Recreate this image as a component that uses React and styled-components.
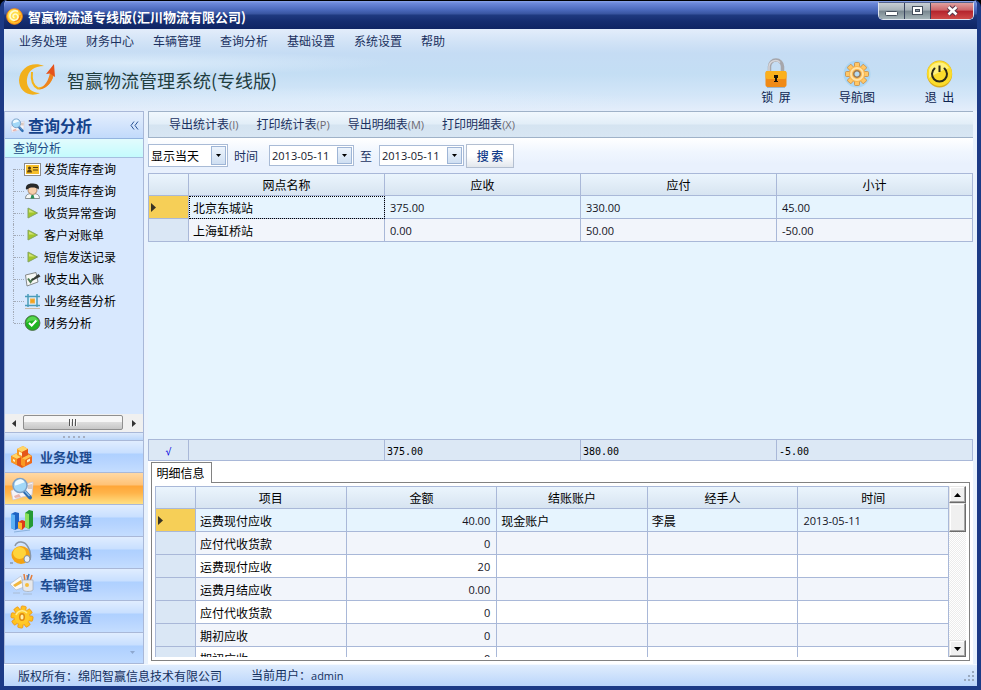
import React from "react";
import styled, { createGlobalStyle, css } from "styled-components";

const line = "#a9b8d8";
const cjk = '"Noto Sans CJK SC", sans-serif';
const latin = '"Open Sans", "Noto Sans CJK SC", sans-serif';

const GlobalStyle = createGlobalStyle`
  *, *::before, *::after { box-sizing: border-box; }
  html, body, #root { height: 100%; margin: 0; }
  body { background: #000; font: 12px/16px ${cjk}; color: #000; overflow: hidden; }
  button, input, select { font: inherit; color: inherit; margin: 0; padding: 0; border: 0; background: none; border-radius: 0; }
  button { white-space: pre; }
  svg { display: block; flex: none; }
`;

const Window = styled.div`
  height: 100vh;
  display: flex;
  flex-direction: column;
  border: solid #1c3a86;
  border-width: 0 4px 4px;
  border-radius: 7px 7px 0 0;
  background: #e9f2fd;
  overflow: hidden;
`;

const TitleBar = styled.header`
  flex: none;
  display: flex;
  align-items: flex-start;
  height: 29px;
  margin: 0 -4px;
  border-top: 1px solid #000;
  background: linear-gradient(#8ba5ea 0, #6d89da 2px, #4a68bb 9px, #38549f 13px, #1f3a80 14px, #152d70 20px, #0f2564 28px);
`;

const TitleText = styled.h1`
  flex: 1;
  margin: 7px 0 0 5px;
  font-size: 13px;
  line-height: 18px;
  font-weight: 700;
  color: #fff;
`;

const TitleIcon = styled.div`
  margin: 7px 0 0 6px;
`;

const Controls = styled.div`
  display: flex;
  margin: 1px 7px 0 0;
  height: 18px;
  border: 1px solid #dfe5ef;
  border-top-color: #56648c;
  border-radius: 0 0 5px 5px;
  overflow: hidden;
`;

const ControlButton = styled.button`
  display: flex;
  align-items: center;
  justify-content: center;
  width: ${(p) => (p.$close ? 42 : 26)}px;
  border-right: ${(p) => (p.$close ? 0 : 1)}px solid #39435f;
  background: ${(p) =>
    p.$close
      ? "linear-gradient(#e0a1a0, #cd6468 45%, #b4232c 50%, #cf4a48)"
      : "linear-gradient(#c8ced4, #a6b0b8 45%, #78868f 50%, #a5b4b8)"};
`;

const Banner = styled.div`
  flex: none;
  display: grid;
  grid-template-columns: 1fr auto;
  grid-template-rows: 24px 58px;
  background:
    radial-gradient(ellipse 260px 12px at 130px 34px, rgba(226, 240, 252, 0.7), transparent),
    radial-gradient(ellipse 300px 14px at 340px 72px, rgba(226, 240, 252, 0.5), transparent),
    linear-gradient(#e3edfb 0, #d0e2f6 14px, #c5dcf4 24px, #c4def4 45px, #d3e6f8 66px, #e4eefb 82px);
`;

const MenuBar = styled.nav`
  grid-column: 1 / -1;
  display: flex;
  gap: 19px;
  padding-left: 15px;
  color: #1b3160;
`;

const MenuButton = styled.button`
  height: 24px;
`;

const Brand = styled.div`
  display: flex;
  align-items: center;
  gap: 10px;
  padding: 0 0 5px 15px;
  font-size: 18px;
  line-height: 26px;
  color: #1f3d3f;
`;

const Actions = styled.div`
  display: flex;
  padding-right: 4px;
`;

const ActionButton = styled.button`
  position: relative;
  display: flex;
  flex-direction: column;
  align-items: center;
  width: ${(p) => p.$width}px;
  height: 52px;
  padding-top: 5px;
  line-height: 14px;
  color: #0d2550;

  & + &::before {
    content: "";
    position: absolute;
    left: 0;
    top: 14px;
    width: 1px;
    height: 26px;
    background: #aecbe9;
  }
`;

const Body = styled.div`
  flex: 1;
  min-height: 0;
  display: grid;
  grid-template-columns: 140px minmax(0, 1fr);
  column-gap: 4px;
  padding-right: 4px;
`;

const Sidebar = styled.aside`
  display: flex;
  flex-direction: column;
  min-height: 0;
  border: 1px solid ${line};
  background: #d8e8fe;
`;

const SideTitle = styled.h2`
  flex: none;
  display: flex;
  align-items: center;
  gap: 3px;
  height: 27px;
  margin: 0;
  padding: 0 4px 0 5px;
  border-bottom: 1px solid #93b4e0;
  background: linear-gradient(#e5effd, #c2dafb);
  font-size: 16px;
  line-height: 22px;
  color: #15428b;
`;

const CollapseButton = styled.button`
  margin-left: auto;
`;

const SideGroup = styled.h3`
  flex: none;
  height: 19px;
  margin: 0;
  padding-left: 8px;
  border-bottom: 1px solid #a5bfdf;
  background: linear-gradient(#e2fbfd, #c4fbfd);
  font-size: 12px;
  line-height: 18px;
  font-weight: 400;
  color: #1b4a86;
`;

const Tree = styled.ul`
  flex: 1;
  min-height: 0;
  margin: 0;
  padding: 0 0 0 8px;
  list-style: none;
`;

const TreeItem = styled.li`
  position: relative;
  height: 22px;
  padding-left: 11px;

  &::before {
    content: "";
    position: absolute;
    left: 0;
    top: ${(p) => (p.$first ? 11 : 0)}px;
    height: ${(p) => (p.$first || p.$last ? 11 : 22)}px;
    border-left: 1px dotted #a3abb8;
  }
  &::after {
    content: "";
    position: absolute;
    left: 1px;
    top: 11px;
    width: 10px;
    border-top: 1px dotted #a3abb8;
  }
`;

const TreeLink = styled.a`
  display: flex;
  align-items: center;
  gap: 3px;
  height: 22px;
  color: #000;
  text-decoration: none;
`;

const HScroll = styled.div`
  flex: none;
  display: flex;
  height: 18px;
  background: #f0f0f0;
`;

const HArrow = styled.button`
  display: flex;
  align-items: center;
  justify-content: center;
  width: 18px;
`;

const HThumb = styled.div`
  flex: 1;
  display: flex;
  align-items: center;
  justify-content: center;
  gap: 1px;
  margin: 1px 2px 2px 0;
  border: 1px solid #8f8f8f;
  border-radius: 2px;
  background: linear-gradient(#f6f6f6 0 45%, #dcdcdc 50%, #c6c6c6);
`;

const Grip = styled.i`
  width: 2px;
  height: 7px;
  border-left: 1px solid #555;
  background: #f8f8f8;
`;

const Splitter = styled.div`
  flex: none;
  display: flex;
  align-items: center;
  justify-content: center;
  gap: 3px;
  height: 9px;
  border: solid ${line};
  border-width: 1px 0;
  background: linear-gradient(#dceafd, #bcd7fb);
`;

const Dot = styled.i`
  width: 2px;
  height: 2px;
  background: #a5afc2;
`;

const NavButton = styled.button`
  flex: none;
  display: flex;
  align-items: center;
  gap: 6px;
  height: 32px;
  padding-left: 5px;
  border-bottom: 1px solid ${line};
  font-size: 13px;
  font-weight: 700;
  color: ${(p) => (p.$active ? "#000" : "#1e4c8f")};
  background: ${(p) =>
    p.$active
      ? "linear-gradient(#ffd9a5 0, #ffc276 12px, #ffa638 13px, #ffb44a 20px, #ffe084 31px)"
      : "linear-gradient(#e0edff 0, #c8dfff 12px, #aed0ff 13px, #b6d4ff 20px, #c4ddff 31px)"};
`;

const NavFooter = styled.div`
  flex: none;
  display: flex;
  align-items: flex-end;
  justify-content: flex-end;
  height: 30px;
  padding: 0 8px 9px 0;
  background: linear-gradient(#e0edff 0, #c8dfff 12px, #aed0ff 13px, #bfdaff 30px);
`;

const Main = styled.main`
  display: flex;
  flex-direction: column;
  min-width: 0;
  min-height: 0;
`;

const Toolbar = styled.div`
  flex: none;
  display: flex;
  gap: 18px;
  height: 27px;
  padding-left: 20px;
  border: 1px solid #9fb2c8;
  border-right: 0;
  background: linear-gradient(#f1f8fe 0, #e2eef8 12px, #d5e4f1 13px, #d8e6f3 25px);
  color: #1b3160;
`;

const ToolButton = styled.button`
  height: 25px;
`;

const Key = styled.span`
  font-family: ${latin};
  font-size: 11px;
  color: #6d6a72;
`;

const FilterBar = styled.form`
  flex: none;
  display: flex;
  align-items: center;
  height: 35px;
  background: linear-gradient(#ffffff 0, #f0f6fe 14px, #e9f1fd 26px);
  color: #1b3160;
`;

const FieldLabel = styled.label`
  padding: 0 ${(p) => (p.$wide ? 11 : 7)}px 0 6px;
`;

const Combo = styled.div`
  position: relative;
  display: flex;
  width: ${(p) => p.$width}px;
  height: ${(p) => p.$height}px;
  padding: 1px;
  border: 1px solid #a9bbd6;
  background: #fff;
  color: #000;
`;

const comboField = css`
  flex: 1;
  min-width: 0;
  width: 0;
  outline: 0;
  appearance: none;
`;

const ComboSelect = styled.select`
  ${comboField}
  padding-left: 1px;
`;

const DateInput = styled.input`
  ${comboField}
  padding-left: 1px;
  font-family: ${latin};
  font-size: 11px;
  color: #14182c;
`;

const DropMark = styled.span`
  position: absolute;
  right: 1px;
  top: 1px;
  bottom: 1px;
  width: 15px;
  display: flex;
  align-items: center;
  justify-content: center;
  border: 1px solid #9eb5d6;
  background: linear-gradient(#edf4fc, #cfdff2);
  pointer-events: none;
`;

const SearchButton = styled.button`
  width: 48px;
  height: 24px;
  margin-left: 2px;
  border: 1px solid #b3bfd1;
  background: linear-gradient(#ffffff 0 50%, #e2e7ed);
  font-weight: 500;
  color: #153d8a;
`;

const GridArea = styled.section`
  flex: 1;
  min-height: 0;
  display: flex;
  flex-direction: column;
  justify-content: space-between;
  background: #e6f4fe;
`;

const Table = styled.table`
  width: 100%;
  table-layout: fixed;
  border-collapse: separate;
  border-spacing: 0;
  border: solid ${line};
  border-width: 1px 0 0 1px;
`;

const MarkCol = styled.col`
  width: 40px;
`;

const HeadCell = styled.th`
  height: 22px;
  padding: 0;
  border: solid ${line};
  border-width: 0 1px 1px 0;
  background: linear-gradient(#ebf5fd, #d7e4f1);
  font-weight: 400;
`;

const Row = styled.tr`
  background: ${(p) => (p.$selected ? "#e6f4fe" : p.$alt ? "#f2f5fb" : "#fff")};
`;

const Cell = styled.td`
  height: 23px;
  padding: 1px 6px 0 4px;
  border: solid ${line};
  border-width: 0 1px 1px 0;
  line-height: 16px;
  text-align: ${(p) => (p.$right ? "right" : "left")};
  ${(p) =>
    p.$number &&
    css`
      padding-left: 5px;
      font-family: ${latin};
      font-size: 11px;
      color: #14141f;
    `}
  ${(p) =>
    p.$focused &&
    css`
      outline: 1px dotted #000;
      outline-offset: -1px;
    `}
`;

const MarkCell = styled.td`
  padding: 0 0 0 2px;
  border: solid ${line};
  border-width: 0 1px 1px 0;
  background: ${(p) => (p.$selected ? "#f6cf57" : "#dae7f5")};
`;

const SumCell = styled.td`
  height: 21px;
  padding: 3px 2px 0;
  border: solid ${line};
  border-width: 0 1px 1px 0;
  background: #dce8f5;
  font: 10px/16px "DejaVu Sans Mono", monospace;
  text-align: ${(p) => (p.$check ? "center" : "left")};
  color: ${(p) => (p.$check ? "#0000e0" : "#000")};
`;

const Detail = styled.section`
  flex: none;
  display: flex;
  flex-direction: column;
  height: 203px;
  padding: 1px 3px 3px;
  background: #fff;
`;

const Tab = styled.button`
  position: relative;
  z-index: 1;
  align-self: flex-start;
  width: 61px;
  height: 21px;
  margin-bottom: -1px;
  padding-right: 2px;
  border: 1px solid #828282;
  border-bottom: 0;
  background: #fff;
  line-height: 18px;
`;

const TabPanel = styled.div`
  flex: 1;
  min-height: 0;
  display: flex;
  padding: 3px;
  border: 1px solid #828282;
`;

const DetailClip = styled.div`
  flex: 1;
  min-width: 0;
  overflow: hidden;
`;

const VScroll = styled.div`
  flex: none;
  display: flex;
  flex-direction: column;
  width: 17px;
  background: repeating-conic-gradient(#fff 0 25%, #ececec 0 50%) 0 0 / 2px 2px;
`;

const raised = css`
  border: 1px solid;
  border-color: #e6e6e6 #6c6c6c #6c6c6c #e6e6e6;
  box-shadow: inset -1px -1px #a5a5a5, inset 1px 1px #fff;
  background: #f0f0f0;
`;

const VArrow = styled.button`
  ${raised}
  display: flex;
  align-items: center;
  justify-content: center;
  height: 17px;
`;

const VThumb = styled.div`
  ${raised}
  height: 29px;
  margin-bottom: auto;
`;

const StatusBar = styled.footer`
  flex: none;
  display: flex;
  align-items: center;
  gap: 29px;
  height: 22px;
  padding: 0 2px 0 14px;
  border-top: 1px solid #f4f9ff;
  background: linear-gradient(#e0edfd, #bad5fb);
  color: #14305e;
`;

const StatusUser = styled.span`
  flex: 1;
`;

const UserName = styled.span`
  font-family: ${latin};
  font-size: 11px;
`;

const Arrow = ({ dir = "down", size = 7, color = "#000" }) => {
  const h = (size + 1) / 2;
  const side = dir === "left" || dir === "right";
  const d = {
    down: `M0 0H${size}L${size / 2} ${h}Z`,
    up: `M0 ${h}H${size}L${size / 2} 0Z`,
    right: `M0 0V${size}L${h} ${size / 2}Z`,
    left: `M${h} 0V${size}L0 ${size / 2}Z`,
  }[dir];
  return (
    <svg width={side ? h : size} height={side ? size : h} aria-hidden="true">
      <path d={d} fill={color} />
    </svg>
  );
};

const teeth = [0, 45, 90, 135, 180, 225, 270, 315];

const SwirlIcon = () => (
  <svg width="17" height="17" viewBox="0 0 17 17" aria-hidden="true">
    <circle cx="8.5" cy="8.5" r="7.8" fill="#ffc02a" stroke="#ff8a14" />
    <circle cx="7.7" cy="7.2" r="6" fill="#ffe04e" />
    <path d="M12 3.5C8 1.5 3.5 4.5 4 8.5C4.4 12 9 13.5 11.3 11C13.3 8.5 11 5.5 8.4 6.2C6.3 7 6.7 9.7 8.6 9.5" fill="none" stroke="#fffbd4" strokeWidth="1.5" />
    <path d="M14 7c.6 3.500-2 6.500-5.500 6.500" fill="none" stroke="#f57a12" strokeWidth="1.200" />
  </svg>
);

const LogoIcon = () => (
  <svg width="38" height="33" viewBox="0 0 38 33" aria-hidden="true">
    <path d="M25 3C14-2 1 4 0 17C0 28 10 35 21 30C12 30 7 24 8 16C9 8 15 3 25 3Z" fill="#f2b01c" />
    <path d="M13 9C12 17 14 23 19 25.500C27 25 33 18 33.500 11" fill="none" stroke="#f4b51c" strokeWidth="2" />
    <path d="M20 26.500C29 25 34 18 35 10L31 9C30 17 26 23 20 26.500Z" fill="#ee8420" />
    <path d="M35 1L27 11L31 10.500L36 14Z" fill="#e5531b" />
  </svg>
);

const LockIcon = () => (
  <svg width="26" height="32" viewBox="0 0 26 32" aria-hidden="true">
    <path d="M6.500 15V8.500a6.500 6.500 0 0 1 13 0V15" fill="none" stroke="#a6a6ab" strokeWidth="3.500" />
    <path d="M6 15V8.500a6.500 6.500 0 0 1 11-4" fill="none" stroke="#d6d6da" strokeWidth="1.500" />
    <rect x="2.500" y="13" width="21" height="16" rx="2" fill="#f08a16" />
    <rect x="2.500" y="13" width="21" height="8" rx="2" fill="#fbb01c" />
    <path d="M11 17h4v3h-1v3h1v1h-4v-1h1v-3h-1Z" fill="#1c1308" />
    <path d="M4 29.500h18" stroke="#9db6cc" />
  </svg>
);

const GearIcon = () => (
  <svg width="32" height="32" viewBox="-16 -16 32 32" aria-hidden="true">
    <circle r="13.500" fill="#8dcdf5" opacity=".5" />
    {teeth.map((a) => (
      <rect key={a} x="-2.500" y="-11.500" width="5" height="7" rx="1" transform={`rotate(${a})`} fill="#ffc766" stroke="#c58a45" strokeWidth=".8" />
    ))}
    <circle r="8" fill="#f9b64e" />
    <circle r="6" fill="none" stroke="#ffe2a6" strokeWidth="2" />
    <circle r="3.200" fill="#b5dbf3" stroke="#9a7954" strokeWidth="1.500" />
  </svg>
);

const PowerIcon = () => (
  <svg width="32" height="32" viewBox="0 0 32 32" aria-hidden="true">
    <ellipse cx="15.500" cy="16" rx="12.700" ry="13.500" fill="#d8ac20" />
    <circle cx="15.500" cy="15.500" r="12.500" fill="#fbdc2b" />
    <path d="M5 12a11 11 0 0 1 20-2C18 12 10 17 5 20Z" fill="#fff17d" />
    <path d="M10.500 10.500A7.500 7.500 0 1 0 20.500 10.500" fill="none" stroke="#2d2b18" strokeWidth="2" strokeLinecap="round" />
    <path d="M15.500 7.500V14" stroke="#2d2b18" strokeWidth="2" />
  </svg>
);

const LensIcon = ({ size = 24 }) => (
  <svg width={size} height={size} viewBox="0 0 24 24" aria-hidden="true">
    <path d="M1 14L12 8L23 5L22 18L12 20L3 23Z" fill="#f6f4f8" stroke="#cdc9d8" strokeWidth=".8" />
    <path d="M4 19L9 17L11 20L5 21Z" fill="#e9b3ac" />
    <path d="M17 8L22 7V12L18 12Z" fill="#d9c8c0" />
    <path d="M14.500 14.500L20 20.500" stroke="#2e6db2" strokeWidth="4" strokeLinecap="round" />
    <path d="M15 14L19.500 19" stroke="#8fc0ea" strokeWidth="1.200" />
    <circle cx="10" cy="8.500" r="7" fill="#a2d8f8" stroke="#7da0c6" strokeWidth="1.500" />
    <path d="M5 8.500a5 5 0 0 1 9.500-3C12 6 8 8 5 8.500Z" fill="#effaff" />
  </svg>
);

const CardIcon = () => (
  <svg width="17" height="16" viewBox="0 0 17 16" aria-hidden="true">
    <rect x=".5" y="2.500" width="16" height="12" fill="#fff" stroke="#8c8c8c" />
    <rect x="2" y="4" width="13" height="9" fill="#f5bf2c" />
    <circle cx="5.500" cy="7" r="1.500" fill="#4b3a18" />
    <path d="M3 11.500c0-4 5-4 5 0ZM9 6h5v1H9ZM9 8.500h5v1H9Z" fill="#5c4411" />
  </svg>
);

const PersonIcon = () => (
  <svg width="17" height="16" viewBox="0 0 17 16" aria-hidden="true">
    <path d="M1.500 15.500c0-4 3-5 7-5s7 1 7 5Z" fill="#f4f7f7" stroke="#6f7677" strokeWidth=".8" />
    <circle cx="8.500" cy="7" r="4.500" fill="#f6cfac" stroke="#85552f" strokeWidth=".6" />
    <path d="M2 6.500C1 2 5 0 9 .5c5 0 7 3 5.500 6C12 4 6 4 4 6Z" fill="#27292a" />
    <path d="M7.500 12h2l1 3.500h-4Z" fill="#2b8f57" />
  </svg>
);

const PlayIcon = () => (
  <svg width="17" height="16" viewBox="0 0 17 16" aria-hidden="true">
    <path d="M4 3L13.500 8L4 13Z" fill="#a3c62a" stroke="#86a564" />
    <path d="M5 4.500L10.500 7.500H5Z" fill="#d2e279" />
  </svg>
);

const NoteIcon = () => (
  <svg width="17" height="16" viewBox="0 0 17 16" aria-hidden="true">
    <path d="M1.500 4L12 1.500L14 11L3 15Z" fill="#f7f8f5" stroke="#85898a" />
    <path d="M4 7.500L6.500 11L9 7.500" fill="none" stroke="#4b7a50" strokeWidth="2" />
    <path d="M7 9L14.500 3L16.500 5.500L9 9.500Z" fill="#383c38" />
  </svg>
);

const FrameIcon = () => (
  <svg width="17" height="16" viewBox="0 0 17 16" aria-hidden="true">
    <path d="M3 3h11v10H3Z" fill="#dceffa" />
    <path d="M4 1v13M13 1v13M1 3.500h15M1 12.500h15" stroke="#4a9cba" strokeWidth="1.500" />
    <rect x="6.500" y="6" width="4" height="4" fill="#f4a41c" stroke="#f0b04a" />
    <path d="M1 15.500h15" stroke="#c9b9a4" />
  </svg>
);

const CheckIcon = () => (
  <svg width="17" height="16" viewBox="0 0 17 16" aria-hidden="true">
    <circle cx="8.500" cy="8" r="7.400" fill="#1fb322" stroke="#526c4c" />
    <path d="M2.500 8a6 6 0 0 1 12-1C11 5 6 5 2.500 8Z" fill="#58d64e" />
    <path d="M5 8L7.700 10.500L12.300 5.500" fill="none" stroke="#fff" strokeWidth="2" />
  </svg>
);

const BoxesIcon = () => (
  <svg width="24" height="24" viewBox="0 0 24 24" aria-hidden="true">
    <path d="M1 11L7 8L12 10L18 8L22 11V18L12 23L1 17Z" fill="#ee6a1c" />
    <path d="M1 11L7 8L13 11L7 14Z" fill="#ffd568" />
    <path d="M1 11L7 14V20L1 17Z" fill="#f99a22" />
    <path d="M7 14L12 12V22L7 20Z" fill="#e4571a" />
    <path d="M11 13L17 9L22 11L15 15Z" fill="#ffc14a" />
    <path d="M11 13L15 15V22L11 20Z" fill="#f99a22" />
    <path d="M7 4L13 1L18 4V10L12 13L7 10Z" fill="#f99a22" />
    <path d="M7 4L13 1L18 4L12 7Z" fill="#ffd568" />
    <path d="M12 7L18 4V10L12 13Z" fill="#e4571a" />
    <path d="M9 6.500L12 8V11L9 9.500ZM3 14L5 15V17L3 16ZM17 15L20 13.500V16L17 17.500Z" fill="#fff0c4" />
  </svg>
);

const ChartIcon = () => (
  <svg width="24" height="24" viewBox="0 0 24 24" aria-hidden="true">
    <path d="M1 5L5 3L9 4V19L5 21L1 19Z" fill="#1d62c4" />
    <path d="M1 5L5 6V21L1 19Z" fill="#5db2f6" />
    <path d="M8 13L12 11L15 12V18L12 21L8 19Z" fill="#dd3a18" />
    <path d="M8 13L12 14V21L8 19Z" fill="#fcb62e" />
    <path d="M15 4L19 1L23 2V17L19 20L15 18Z" fill="#259a34" />
    <path d="M15 4L19 5V20L15 18Z" fill="#8be05c" />
    <path d="M4 23L20 21" stroke="#8ab1dc" />
  </svg>
);

const HeadsetIcon = () => (
  <svg width="24" height="24" viewBox="0 0 24 24" aria-hidden="true">
    <ellipse cx="11" cy="14" rx="9.500" ry="9" fill="#f4a312" />
    <ellipse cx="9.500" cy="12" rx="6.500" ry="6" fill="#ffd43b" />
    <path d="M5 5C7-1 15 0 18 6C20.500 10 21 15 20 19" fill="none" stroke="#8b97a6" strokeWidth="1.500" />
    <ellipse cx="17" cy="18" rx="3" ry="3.500" fill="#eceff4" stroke="#8490a0" />
    <path d="M0 22h3" stroke="#6b7c90" />
  </svg>
);

const CupIcon = () => (
  <svg width="24" height="24" viewBox="0 0 24 24" aria-hidden="true">
    <path d="M0 11L11 3L14 14L6 17Z" fill="#f9f9f9" stroke="#b6bcc5" strokeWidth=".7" />
    <path d="M3 12L11 7L12 10L5 14Z" fill="#f2b63d" />
    <path d="M15 8L14 1M18 8L17 2M20 8L22 2" stroke="#e57b35" strokeWidth="1.500" />
    <path d="M17 8L19 1" stroke="#427fc4" strokeWidth="1.500" />
    <path d="M12 7H23V17C21 19 15 19 13 17Z" fill="#e7e8eb" stroke="#a4abb5" strokeWidth=".7" />
    <circle cx="17" cy="12" r="2" fill="#f6bd3d" />
    <path d="M3 20h7M13 21h9" stroke="#a9bcd4" />
  </svg>
);

const SunGearIcon = () => (
  <svg width="24" height="24" viewBox="-12 -12 24 24" aria-hidden="true">
    {teeth.map((a) => (
      <rect key={a} x="-2.500" y="-11" width="5" height="7" rx="1" transform={`rotate(${a + 10})`} fill="#ffc21e" stroke="#ee9612" strokeWidth=".8" />
    ))}
    <circle r="7.500" fill="#ffc928" />
    <path d="M-6 -2A6.500 6.500 0 0 1 5 -4" fill="none" stroke="#ffec91" strokeWidth="1.500" />
    <ellipse rx="2.300" ry="3.300" fill="#fff0aa" stroke="#e08a10" strokeWidth="1.500" />
  </svg>
);

const menus = ["业务处理", "财务中心", "车辆管理", "查询分析", "基础设置", "系统设置", "帮助"];
const actions = [
  ["锁  屏", LockIcon, 64],
  ["导航图", GearIcon, 98],
  ["退  出", PowerIcon, 67],
];
const treeItems = [
  ["发货库存查询", CardIcon],
  ["到货库存查询", PersonIcon],
  ["收货异常查询", PlayIcon],
  ["客户对账单", PlayIcon],
  ["短信发送记录", PlayIcon],
  ["收支出入账", NoteIcon],
  ["业务经营分析", FrameIcon],
  ["财务分析", CheckIcon],
];
const navItems = [
  ["业务处理", BoxesIcon],
  ["查询分析", LensIcon],
  ["财务结算", ChartIcon],
  ["基础资料", HeadsetIcon],
  ["车辆管理", CupIcon],
  ["系统设置", SunGearIcon],
];
const tools = [
  ["导出统计表", "(I)"],
  ["打印统计表", "(P)"],
  ["导出明细表", "(M)"],
  ["打印明细表", "(X)"],
];
const sites = [
  ["北京东城站", "375.00", "330.00", "45.00"],
  ["上海虹桥站", "0.00", "50.00", "-50.00"],
];
const details = [
  ["运费现付应收", "40.00", "现金账户", "李晨", "2013-05-11"],
  ["应付代收货款", "0"],
  ["运费现付应收", "20"],
  ["运费月结应收", "0.00"],
  ["应付代收货款", "0"],
  ["期初应收", "0"],
  ["期初应收", "0"],
];

const Head = ({ titles }) => (
  <thead>
    <tr>
      <HeadCell aria-label="标记" />
      {titles.map((t) => (
        <HeadCell key={t} scope="col">{t}</HeadCell>
      ))}
    </tr>
  </thead>
);

const DateField = ({ id, label }) => (
  <Combo $width={85} $height={21}>
    <DateInput id={id} aria-label={label} defaultValue="2013-05-11" />
    <DropMark><Arrow size={5} /></DropMark>
  </Combo>
);

export default function App() {
  return (
    <>
      <GlobalStyle />
      <Window>
        <TitleBar>
          <TitleIcon><SwirlIcon /></TitleIcon>
          <TitleText>智赢物流通专线版(汇川物流有限公司)</TitleText>
          <Controls>
            <ControlButton aria-label="最小化">
              <svg width="13" height="12"><rect x=".5" y="6.500" width="12" height="4" rx="1" fill="#fff" stroke="#444e5c" /></svg>
            </ControlButton>
            <ControlButton aria-label="最大化">
              <svg width="13" height="12"><rect x="1.500" y="1.500" width="10" height="8" fill="#fff" stroke="#444e5c" /><rect x="4.500" y="4.500" width="4" height="2" fill="#8e9ba5" stroke="#444e5c" /></svg>
            </ControlButton>
            <ControlButton $close aria-label="关闭">
              <svg width="13" height="12"><path d="M2.500 2L10.500 9.500M10.500 2L2.500 9.500" stroke="#58374b" strokeWidth="4.500" /><path d="M2.500 2L10.500 9.500M10.500 2L2.500 9.500" stroke="#fff" strokeWidth="2.500" /></svg>
            </ControlButton>
          </Controls>
        </TitleBar>

        <Banner>
          <MenuBar>
            {menus.map((m) => <MenuButton key={m}>{m}</MenuButton>)}
          </MenuBar>
          <Brand><LogoIcon />智赢物流管理系统(专线版)</Brand>
          <Actions>
            {actions.map(([label, Icon, width]) => (
              <ActionButton key={label} $width={width}><Icon />{label}</ActionButton>
            ))}
          </Actions>
        </Banner>

        <Body>
          <Sidebar>
            <SideTitle>
              <LensIcon size={15} />查询分析
              <CollapseButton aria-label="收起">
                <svg width="9" height="9"><path d="M4 .5L1 4.500L4 8.500M8 .5L5 4.500L8 8.500" fill="none" stroke="#2c5596" /></svg>
              </CollapseButton>
            </SideTitle>
            <SideGroup>查询分析</SideGroup>
            <Tree>
              {treeItems.map(([label, Icon], i) => (
                <TreeItem key={label} $first={i === 0} $last={i === treeItems.length - 1}>
                  <TreeLink href="#"><Icon />{label}</TreeLink>
                </TreeItem>
              ))}
            </Tree>
            <HScroll>
              <HArrow aria-label="向左"><Arrow dir="left" color="#333" /></HArrow>
              <HThumb><Grip /><Grip /><Grip /></HThumb>
              <HArrow aria-label="向右"><Arrow dir="right" color="#333" /></HArrow>
            </HScroll>
            <Splitter><Dot /><Dot /><Dot /><Dot /><Dot /></Splitter>
            {navItems.map(([label, Icon], i) => (
              <NavButton key={label} $active={i === 1}><Icon />{label}</NavButton>
            ))}
            <NavFooter><Arrow size={5} color="#8ea8cf" /></NavFooter>
          </Sidebar>

          <Main>
            <Toolbar>
              {tools.map(([label, key]) => (
                <ToolButton key={key}>{label}<Key>{key}</Key></ToolButton>
              ))}
            </Toolbar>
            <FilterBar onSubmit={(e) => e.preventDefault()}>
              <Combo $width={80} $height={23}>
                <ComboSelect aria-label="范围"><option>显示当天</option></ComboSelect>
                <DropMark><Arrow size={5} /></DropMark>
              </Combo>
              <FieldLabel htmlFor="from" $wide>时间</FieldLabel>
              <DateField id="from" label="开始时间" />
              <FieldLabel htmlFor="to">至</FieldLabel>
              <DateField id="to" label="结束时间" />
              <SearchButton type="submit">搜 索</SearchButton>
            </FilterBar>

            <GridArea>
              <Table>
                <colgroup><MarkCol /><col /><col /><col /><col /></colgroup>
                <Head titles={["网点名称", "应收", "应付", "小计"]} />
                <tbody>
                  {sites.map((row, i) => (
                    <Row key={row[0]} $selected={i === 0} $alt={i === 1}>
                      <MarkCell $selected={i === 0}>{i === 0 && <Arrow dir="right" size={9} color="#3a3424" />}</MarkCell>
                      {row.map((v, c) => (
                        <Cell key={c} $number={c > 0} $focused={i === 0 && c === 0}>{v}</Cell>
                      ))}
                    </Row>
                  ))}
                </tbody>
              </Table>
              <Table>
                <colgroup><MarkCol /><col /><col /><col /><col /></colgroup>
                <tbody>
                  <tr>
                    <SumCell $check>√</SumCell>
                    <SumCell />
                    <SumCell>375.00</SumCell>
                    <SumCell>380.00</SumCell>
                    <SumCell>-5.00</SumCell>
                  </tr>
                </tbody>
              </Table>
            </GridArea>

            <Detail>
              <Tab role="tab" aria-selected="true">明细信息</Tab>
              <TabPanel role="tabpanel">
                <DetailClip>
                  <Table>
                    <colgroup><MarkCol /><col /><col /><col /><col /><col /></colgroup>
                    <Head titles={["项目", "金额", "结账账户", "经手人", "时间"]} />
                    <tbody>
                      {details.map((row, i) => (
                        <Row key={i} $selected={i === 0} $alt={i % 2 === 1}>
                          <MarkCell $selected={i === 0}>{i === 0 && <Arrow dir="right" size={9} color="#3a3424" />}</MarkCell>
                          {[0, 1, 2, 3, 4].map((c) => (
                            <Cell key={c} $number={c === 1 || c === 4} $right={c === 1}>{row[c]}</Cell>
                          ))}
                        </Row>
                      ))}
                    </tbody>
                  </Table>
                </DetailClip>
                <VScroll>
                  <VArrow aria-label="向上"><Arrow dir="up" /></VArrow>
                  <VThumb />
                  <VArrow aria-label="向下"><Arrow /></VArrow>
                </VScroll>
              </TabPanel>
            </Detail>
          </Main>
        </Body>

        <StatusBar>
          <span>版权所有：绵阳智赢信息技术有限公司</span>
          <StatusUser>当前用户：<UserName>admin</UserName></StatusUser>
          <svg width="12" height="12" aria-hidden="true">
            <path d="M9 1h2v2H9ZM5 5h2v2H5ZM9 5h2v2H9ZM1 9h2v2H1ZM5 9h2v2H5ZM9 9h2v2H9Z" fill="#9aa9be" />
          </svg>
        </StatusBar>
      </Window>
    </>
  );
}
